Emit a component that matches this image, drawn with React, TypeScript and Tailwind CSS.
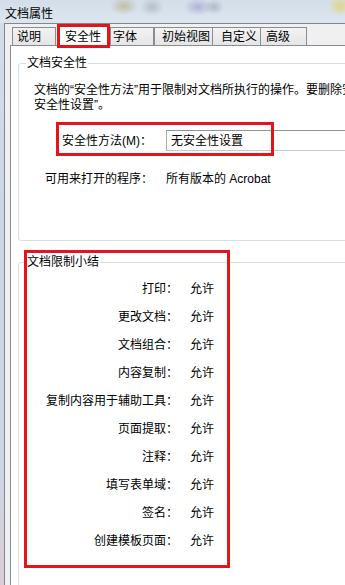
import React from "react";

const FONT = "font-['Liberation_Sans','Noto_Sans_CJK_SC',sans-serif]";

const TABS = [
  { label: "说明", box: "w-[44px] ml-[2px] pl-[4px]" },
  { label: "安全性", box: "", active: true },
  { label: "字体", box: "w-[44px] pl-[2px]" },
  { label: "初始视图", box: "w-[59px] pl-[7px]" },
  { label: "自定义", box: "w-[49px] pl-[8px] -ml-[1px]" },
  { label: "高级", box: "w-[47px] pl-[5px] -ml-[1px]" },
];

const LIMITS = [
  "打印",
  "更改文档",
  "文档组合",
  "内容复制",
  "复制内容用于辅助工具",
  "页面提取",
  "注释",
  "填写表单域",
  "签名",
  "创建模板页面",
];

function TabStrip() {
  return (
    <div className="flex h-[24px] items-end">
      {TABS.map((t) =>
        t.active ? (
          <div
            key={t.label}
            className="relative z-10 -mb-[3px] ml-[1px] flex h-[24px] w-[53px] items-center border-[3px] border-[#e3141b] bg-white pl-[5px] pt-[1px]"
          >
            {t.label}
          </div>
        ) : (
          <div
            key={t.label}
            className={`flex h-[18px] items-center border border-b-0 border-[#898c95] bg-[linear-gradient(#f3f3f3,#e5e5e5)] pt-[1px] ${t.box}`}
          >
            {t.label}
          </div>
        ),
      )}
    </div>
  );
}

function GroupBox({ title, children }: { title: string; children: React.ReactNode }) {
  return (
    <fieldset className="w-[400px] rounded-[3px] border border-[#d5dfe5]">
      <legend className="ml-[7px] px-[1px] leading-[16px]">{title}</legend>
      {children}
    </fieldset>
  );
}

export default function App() {
  return (
    <div
      className={`flex h-[585px] w-[345px] flex-col overflow-hidden bg-[linear-gradient(180deg,#d2deea,#c9d6e4_40%,#cdd6e2_80%,#d9cdd6)] text-[12px] text-black ${FONT}`}
    >
      {/* glass title bar */}
      <div className="h-[23px] shrink-0 bg-[radial-gradient(ellipse_14px_9px_at_124px_6px,rgba(178,160,112,0.55),transparent),radial-gradient(ellipse_12px_9px_at_152px_7px,rgba(120,130,140,0.35),transparent),radial-gradient(ellipse_14px_9px_at_198px_7px,rgba(150,140,200,0.55),transparent),radial-gradient(ellipse_10px_8px_at_214px_7px,rgba(120,130,145,0.4),transparent),radial-gradient(ellipse_12px_10px_at_340px_6px,rgba(225,210,90,0.7),transparent),linear-gradient(180deg,#d3deea,#dde6ef)] pl-[5px] pt-[6px] leading-[16px]">
        文档属性
      </div>

      <div className="flex min-h-0 flex-1">
        <div className="w-[4px] shrink-0" />
        <div className="flex flex-1 flex-col border-l border-t border-[#7d8894] bg-[#f0f0f0] pl-[5px]">
          <TabStrip />

          <div className="flex-1 border-l border-t border-[#898c95] bg-white pl-[7px]">
            <div className="mt-[9px]">
              <GroupBox title="文档安全性">
                <div className="pl-[15px] pb-[53px]">
                  <p className="mt-[12px] whitespace-nowrap leading-[15px]">
                    文档的“安全性方法”用于限制对文档所执行的操作。要删除安全性限制，请将“安全性方法”设置为“无
                    <br />
                    安全性设置”。
                  </p>

                  <div className="relative mt-[17px] flex h-[21px] items-center">
                    <span className="ml-[28px] w-[104px] shrink-0">安全性方法(M)：</span>
                    <div className="flex h-[21px] w-[300px] shrink-0 items-center border border-[#c5c8cf] border-t-[#8e949c] border-l-[#a6abb3] pl-[4px]">
                      无安全性设置
                    </div>
                    <div className="absolute left-[22px] top-[-8px] h-[34px] w-[218px] border-[3px] border-[#e3141b]" />
                  </div>

                  <div className="mt-[20px] flex leading-[16px]">
                    <span className="ml-[11px] w-[121px] shrink-0">可用来打开的程序：</span>
                    <span className="whitespace-nowrap">所有版本的 Acrobat</span>
                  </div>
                </div>
              </GroupBox>
            </div>

            <div className="relative mt-[13px]">
              <GroupBox title="文档限制小结">
                <div className="mt-[5px] pb-[40px]">
                  {LIMITS.map((name) => (
                    <div key={name} className="flex h-[28px] items-center">
                      <span className="w-[159px] shrink-0 text-right">{name}：</span>
                      <span className="ml-[12px]">允许</span>
                    </div>
                  ))}
                </div>
              </GroupBox>
              <div className="absolute left-[6px] top-[-4px] h-[318px] w-[206px] border-[3px] border-[#e3141b]" />
            </div>
          </div>
        </div>
      </div>
    </div>
  );
}
